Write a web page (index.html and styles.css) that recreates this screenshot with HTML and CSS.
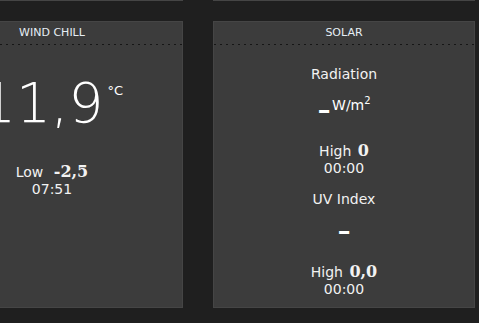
FILE: index.html
```html
<!DOCTYPE html>
<html lang="en">
<head>
    <meta charset="UTF-8">
    <meta name="viewport" content="width=device-width, initial-scale=1.0">
    <title>Weather Station</title>
    <link rel="stylesheet" href="styles.css">
</head>
<body>
    <div class="board">
        <!-- row above, scrolled out of view -->
        <div class="panel panel-top"></div>
        <div class="panel panel-top"></div>

        <div class="panel">
            <div class="panel-head">WIND CHILL</div>
            <div class="big-value">11,9<span class="big-unit">&deg;C</span></div>
            <div class="minmax">Low <b class="num num-low">-2,5</b></div>
            <div class="time">07:51</div>
        </div>

        <div class="panel">
            <div class="panel-head">SOLAR</div>
            <div class="label label-first">Radiation</div>
            <div class="dash-value">-<span class="unit">W/m<sup>2</sup></span></div>
            <div class="minmax">High <b class="num">0</b></div>
            <div class="time">00:00</div>
            <div class="label">UV Index</div>
            <div class="dash-value dash-uv">-</div>
            <div class="minmax">High <b class="num">0,0</b></div>
            <div class="time">00:00</div>
        </div>
    </div>
</body>
</html>
```

FILE: styles.css
```css
/* Page */
body {
    margin: 0;
    background: #1f1f1f;
    color: #f2f2f2;
    font-family: "DejaVu Sans", Verdana, sans-serif;
    overflow: hidden;
}

.board {
    display: grid;
    grid-template-columns: 262px 262px;
    grid-auto-rows: 287px;
    column-gap: 30px;
    row-gap: 20px;
    margin-left: -79px;
    margin-top: -286px;
}

/* Panels */
.panel {
    box-sizing: border-box;
    background: #3c3c3c;
    border: 1px solid #454545;
    text-align: center;
}

.panel-head {
    height: 23px;
    line-height: 22px;
    font-size: 11px;
    color: #e6eef5;
    background: repeating-linear-gradient(to right, #161616 0 2px, transparent 2px 6px) bottom / 100% 1px no-repeat;
}

/* Wind chill */
.big-value {
    margin-top: 30px;
    font-family: "DejaVu Sans", sans-serif;
    font-weight: 200;
    font-size: 55px;
    line-height: 56px;
    color: #ffffff;
}

.big-unit {
    font-weight: normal;
    font-size: 13px;
    line-height: 13px;
    vertical-align: 27px;
    margin-left: 4px;
}

/* Solar */
.label {
    margin-top: 15px;
    font-size: 14px;
    line-height: 17px;
}

.label-first {
    margin-top: 21px;
}

.dash-value {
    margin-top: 7px;
    font-size: 38px;
    line-height: 38px;
    color: #ffffff;
}

.dash-uv {
    margin-top: 3px;
}

.unit {
    font-size: 14px;
    line-height: 14px;
    vertical-align: 12px;
    margin-left: 1px;
}

.unit sup {
    font-size: 10px;
    line-height: 0;
    vertical-align: 6px;
}

/* High / low rows */
.minmax {
    margin-top: 33px;
    font-size: 14px;
    line-height: 17px;
}

.dash-value + .minmax {
    margin-top: 15px;
}

.num {
    font-family: "DejaVu Serif", Georgia, serif;
    font-size: 16px;
    line-height: 1;
    margin-left: 2px;
}

.num-low {
    margin-left: 6px;
}

.time {
    font-size: 14px;
    line-height: 16px;
}
```
